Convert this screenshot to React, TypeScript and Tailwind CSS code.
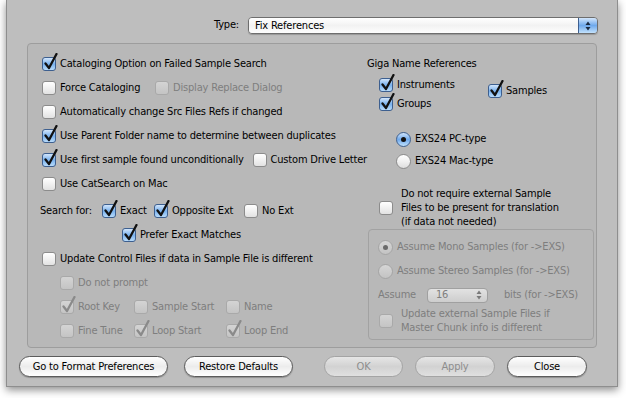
import React from 'react';

const font = { fontFamily: '"DejaVu Sans Condensed", "DejaVu Sans", sans-serif' };

const Check: React.FC<{ on?: boolean; dis?: boolean }> = ({ on, dis }) => {
  const box = dis
    ? 'border-[#a9a9a9] bg-gradient-to-b from-[#d4d4d4] to-[#c4c4c4]'
    : on
      ? 'border-[#3d5f8f] bg-gradient-to-b from-[#d3e6fb] via-[#78b1ee] to-[#b8dbfa]'
      : 'border-[#8c8c8c] bg-gradient-to-b from-[#ffffff] via-[#f1f1f1] to-[#e2e2e2]';
  return (
    <span className="relative inline-block w-[14px] h-[14px] shrink-0">
      <span className={`absolute inset-0 rounded-[3px] border ${box}`} />
      {on && (
        <svg className="absolute left-[2px] top-[-4px]" width="14" height="17" viewBox="0 0 14 17">
          <path
            d="M1.5 10.5 L5 15 L12.5 1"
            fill="none"
            stroke={dis ? '#8a8a8a' : '#111'}
            strokeWidth="2.3"
            strokeLinecap="round"
            strokeLinejoin="round"
          />
        </svg>
      )}
    </span>
  );
};

const Radio: React.FC<{ on?: boolean; dis?: boolean }> = ({ on, dis }) => {
  const c = dis
    ? 'border-[#a5a5a5] bg-gradient-to-b from-[#d6d6d6] to-[#c3c3c3]'
    : on
      ? 'border-[#3d5f8f] bg-gradient-to-b from-[#cfe4fb] via-[#6fa9ec] to-[#bfe0fb]'
      : 'border-[#8c8c8c] bg-gradient-to-b from-[#ffffff] via-[#f0f0f0] to-[#dedede]';
  return (
    <span className={`w-[15px] h-[15px] rounded-full border shrink-0 flex items-center justify-center ${c}`}>
      {on && <span className={`w-[5px] h-[5px] rounded-full ${dis ? 'bg-[#6a6a6a]' : 'bg-[#111]'}`} />}
    </span>
  );
};

const Opt: React.FC<{ label: string; on?: boolean; dis?: boolean; w?: string }> = ({ label, on, dis, w }) => (
  <span className={`flex items-center gap-[4px] whitespace-nowrap ${w ?? ''}`}>
    <Check on={on} dis={dis} />
    <span className={dis ? 'text-[#7e7e7e]' : 'text-black'}>{label}</span>
  </span>
);

const Row: React.FC<{ children: React.ReactNode; className?: string }> = ({ children, className }) => (
  <div className={`h-[24px] flex items-center ${className ?? ''}`}>{children}</div>
);

const Arrows: React.FC<{ color: string }> = ({ color }) => (
  <svg width="6" height="10" viewBox="0 0 6 10">
    <path d="M3 0.5 L5.5 4 L0.5 4 Z" fill={color} />
    <path d="M3 9.5 L5.5 6 L0.5 6 Z" fill={color} />
  </svg>
);

const Button: React.FC<{ label: string; w: string; dis?: boolean }> = ({ label, w, dis }) => (
  <button
    className={`${w} h-[21px] rounded-full border flex items-center justify-center text-[11px] ${
      dis
        ? 'border-[#a4a4a4] bg-gradient-to-b from-[#e6e6e6] via-[#d2d2d2] to-[#e0e0e0] text-[#8d8d8d]'
        : 'border-[#5c5c5c] bg-gradient-to-b from-[#ffffff] via-[#ececec] to-[#ffffff] text-black shadow-[0_1px_1px_rgba(0,0,0,0.25)]'
    }`}
  >
    {label}
  </button>
);

export default function App() {
  return (
    <div className="w-[626px] h-[398px] bg-white overflow-hidden text-[11px] leading-[14px] tracking-[-0.18px]" style={font}>
      <div className="ml-[6px] w-[612px] h-[387px] bg-[#bebebe] border-x border-b border-[#8e8e8e] shadow-[0_3px_8px_rgba(0,0,0,0.45)] flex flex-col">
        {/* Type popup */}
        <div className="h-[43px] flex items-start justify-end pr-[19px] pt-[17px] gap-[9px]">
          <span className="mt-[1px]">Type:</span>
          <div className="w-[350px] h-[17px] rounded-[4px] border border-[#6e6e6e] flex overflow-hidden shadow-[0_1px_1px_rgba(0,0,0,0.2)]">
            <div className="flex-1 bg-gradient-to-b from-[#ffffff] via-[#f2f2f2] to-[#fdfdfd] pl-[6px] flex items-center">Fix References</div>
            <div className="w-[19px] border-l border-[#3d5f8f] bg-gradient-to-b from-[#d3e6fb] via-[#6fa9ec] to-[#c3e2fc] flex items-center justify-center">
              <Arrows color="#1b2a40" />
            </div>
          </div>
        </div>

        {/* Group box */}
        <div className="mx-[20px] h-[305px] rounded-[4px] border border-[#9d9d9d] bg-[#b8b8b8] flex">
          <div className="w-[339px] pl-[14px] pt-[8px]">
            <Row><Opt on label="Cataloging Option on Failed Sample Search" /></Row>
            <Row>
              <Opt label="Force Cataloging" w="w-[113px]" />
              <Opt dis label="Display Replace Dialog" />
            </Row>
            <Row><Opt label="Automatically change Src Files Refs if changed" /></Row>
            <Row><Opt on label="Use Parent Folder name to determine between duplicates" /></Row>
            <Row>
              <Opt on label="Use first sample found unconditionally" w="w-[220px]" />
              <Opt label="Custom Drive Letter" />
            </Row>
            <Row><Opt label="Use CatSearch on Mac" /></Row>
            <Row className="mt-[3px]">
              <span className="w-[62px] -ml-[2px]">Search for:</span>
              <Opt on label="Exact" w="w-[52px]" />
              <Opt on label="Opposite Ext" w="w-[90px]" />
              <Opt label="No Ext" />
            </Row>
            <Row className="pl-[80px]"><Opt on label="Prefer Exact Matches" /></Row>
            <Row><Opt label="Update Control Files if data in Sample File is different" /></Row>
            <div className="pl-[18px]">
              <Row><Opt dis label="Do not prompt" /></Row>
              <Row>
                <Opt dis on label="Root Key" w="w-[74px]" />
                <Opt dis label="Sample Start" w="w-[92px]" />
                <Opt dis label="Name" />
              </Row>
              <Row>
                <Opt dis label="Fine Tune" w="w-[74px]" />
                <Opt dis on label="Loop Start" w="w-[92px]" />
                <Opt dis on label="Loop End" />
              </Row>
            </div>
          </div>

          <div className="flex-1 pt-[12px]">
            <div className="h-[16px] flex items-center">Giga Name References</div>
            <div className="flex items-start mt-[3px]">
              <div className="pl-[12px] w-[121px]">
                <div className="h-[19px] flex items-center"><Opt on label="Instruments" /></div>
                <div className="h-[19px] flex items-center"><Opt on label="Groups" /></div>
              </div>
              <div className="h-[19px] flex items-center mt-[6px]"><Opt on label="Samples" /></div>
            </div>
            <div className="pl-[29px] mt-[15px]">
              <div className="h-[22px] flex items-center gap-[4px]"><Radio on /><span>EXS24 PC-type</span></div>
              <div className="h-[22px] flex items-center gap-[4px]"><Radio /><span>EXS24 Mac-type</span></div>
            </div>
            <div className="flex items-center pl-[12px] mt-[15px] gap-[8px]">
              <Check />
              <span>Do not require external Sample<br />Files to be present for translation<br />(if data not needed)</span>
            </div>
            <div className="ml-[1px] w-[226px] h-[111px] rounded-[4px] border border-[#a2a2a2] pl-[9px] pt-[5px] text-[#7e7e7e]">
              <div className="h-[24px] flex items-center gap-[4px]"><Radio on dis /><span>Assume Mono Samples (for -&gt;EXS)</span></div>
              <div className="h-[24px] flex items-center gap-[4px]"><Radio dis /><span>Assume Stereo Samples (for -&gt;EXS)</span></div>
              <div className="h-[24px] flex items-center">
                <span className="w-[49px]">Assume</span>
                <div className="w-[61px] h-[15px] rounded-[4px] border border-[#a0a0a0] bg-gradient-to-b from-[#e2e2e2] to-[#cdcdcd] flex items-center justify-between pl-[8px] pr-[5px]">
                  <span>16</span>
                  <Arrows color="#7a7a7a" />
                </div>
                <span className="ml-[16px]">bits (for -&gt;EXS)</span>
              </div>
              <div className="flex items-center gap-[8px] pl-[1px]">
                <Check dis />
                <span>Update external Sample Files if<br />Master Chunk info is different</span>
              </div>
            </div>
          </div>
        </div>

        {/* Buttons */}
        <div className="flex items-center mt-[8px] pl-[12px]">
          <Button label="Go to Format Preferences" w="w-[149px]" />
          <Button label="Restore Defaults" w="w-[109px] ml-[16px]" />
          <Button dis label="OK" w="w-[79px] ml-[31px]" />
          <Button dis label="Apply" w="w-[80px] ml-[12px]" />
          <Button label="Close" w="w-[80px] ml-[12px]" />
        </div>
      </div>
    </div>
  );
}
